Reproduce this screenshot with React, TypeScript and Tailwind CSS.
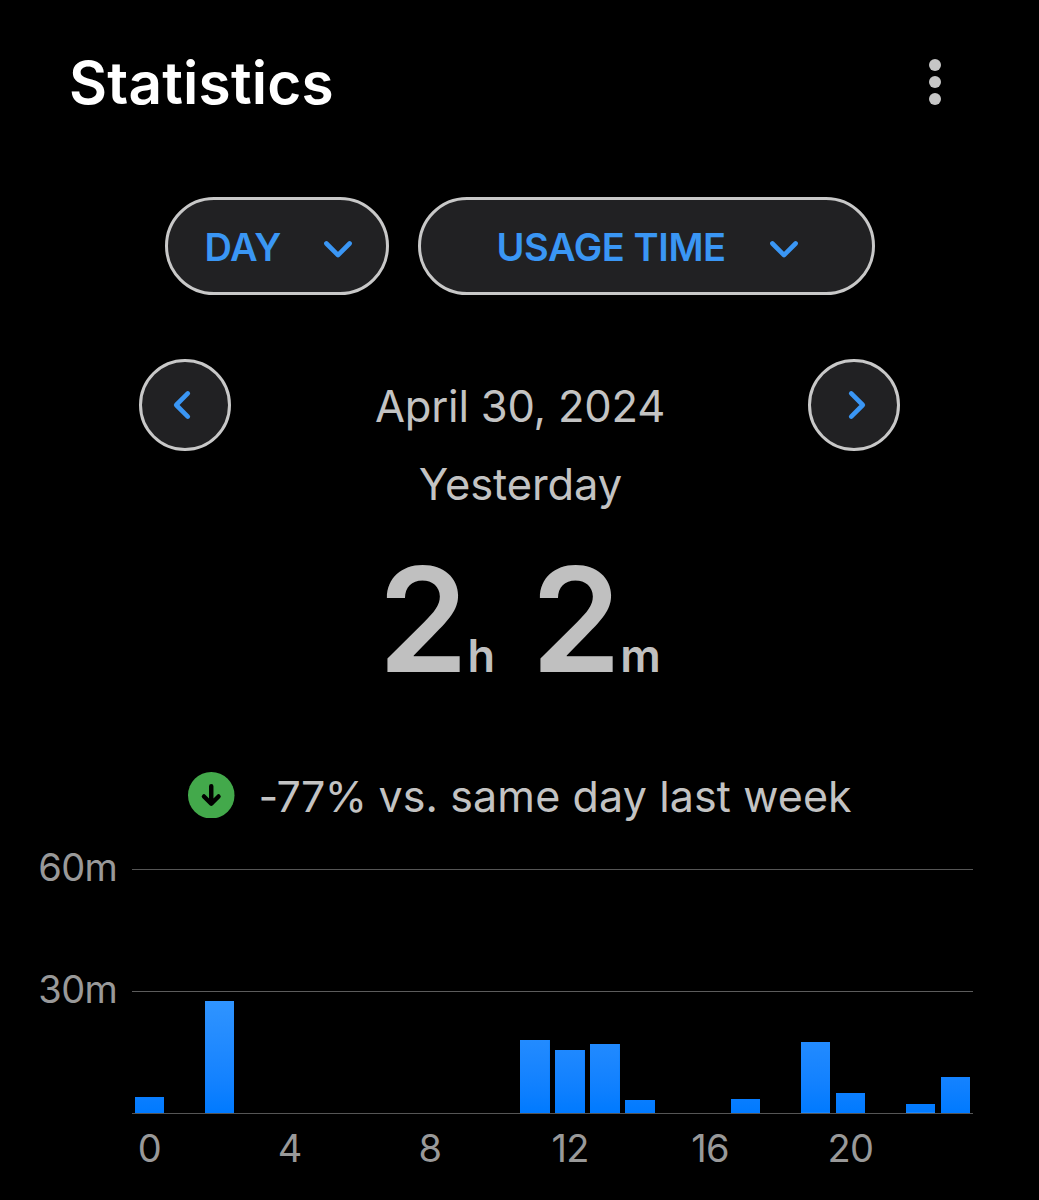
import type { ReactNode } from "react";

// minutes of usage for each hour of the day
const usage = [
  4, 0, 27.6, 0, 0, 0, 0, 0, 0, 0, 0.1, 18, 15.4, 16.9, 3.1, 0, 0, 3.5, 0.1, 17.4, 5, 0, 2.1, 8.9,
];

const hourLabels = [0, 4, 8, 12, 16, 20];

const PX_PER_MINUTE = 4.06;

function Chevron({ className, d }: { className: string; d: string }) {
  return (
    <svg className={className} viewBox="0 0 32 32" fill="none" stroke="#3a96f4" strokeWidth="4.6" strokeLinecap="round" strokeLinejoin="round">
      <path d={d} />
    </svg>
  );
}

function RoundButton({ label, children }: { label: string; children: ReactNode }) {
  return (
    <button
      aria-label={label}
      className="flex size-[92px] items-center justify-center rounded-full border-3 border-[#c8c8c8] bg-[#212123]"
    >
      {children}
    </button>
  );
}

function Header() {
  return (
    <header className="flex h-[165px] items-center justify-between pr-[98px] pl-[69px]">
      <h1 className="mt-0.5 text-[58.5px] leading-none font-semibold tracking-[0.2px] text-white">Statistics</h1>
      <button aria-label="More" className="mb-px flex flex-col gap-[5.4px]">
        <span className="size-3 rounded-full bg-[#c6c6c6]" />
        <span className="size-3 rounded-full bg-[#c6c6c6]" />
        <span className="size-3 rounded-full bg-[#c6c6c6]" />
      </button>
    </header>
  );
}

function Filters() {
  return (
    <div className="mt-8 flex h-[98px] gap-[29px] pl-[164.5px] text-[38px] leading-none font-semibold tracking-[-0.4px] text-[#3a96f4]">
      <button className="flex w-[224px] items-center rounded-full border-3 border-[#c8c8c8] bg-[#212123] pl-[37px]">
        <span className="mt-0.5 w-[117px] text-left whitespace-nowrap">DAY</span>
        <Chevron className="mt-[5px] size-8" d="M4.4 10.5 16 22.1 27.6 10.5" />
      </button>
      <button className="flex w-[457px] items-center rounded-full border-3 border-[#c8c8c8] bg-[#212123] pl-[76px]">
        <span className="mt-0.5 w-[271px] text-left whitespace-nowrap">USAGE TIME</span>
        <Chevron className="mt-[5px] size-8" d="M4.4 10.5 16 22.1 27.6 10.5" />
      </button>
    </div>
  );
}

function DateNav() {
  return (
    <div className="mt-16 flex h-[92px] items-center justify-between pr-[139px] pl-[139px]">
      <RoundButton label="Previous day">
        <Chevron className="mr-1.5 size-8" d="M21.8 4.4 10.2 16 21.8 27.6" />
      </RoundButton>
      <span className="mt-[3px] pl-px text-[43.5px] leading-none tracking-[-0.2px] text-[#c3c3c3]">April 30, 2024</span>
      <RoundButton label="Next day">
        <Chevron className="ml-1.5 size-8" d="M10.2 4.4 21.8 16 10.2 27.6" />
      </RoundButton>
    </div>
  );
}

function Total() {
  return (
    <div className="mt-[41px] flex h-[145px] items-baseline justify-center font-semibold text-[#c0c0c0]">
      <span className="text-[145px] leading-[145px]">2</span>
      <span className="-ml-px text-[45px] leading-none">h</span>
      <span className="ml-9 text-[145px] leading-[145px]">2</span>
      <span className="-ml-px text-[45px] leading-none">m</span>
    </div>
  );
}

function Comparison() {
  return (
    <div className="mt-20 flex h-[46px] items-center pl-[188px]">
      <svg className="size-[46.5px] shrink-0" viewBox="0 0 46 46" fill="none">
        <circle cx="23" cy="23" r="23" fill="#43a94b" />
        <path d="M23 14V31M15.8 24.2 23 31.4 30.2 24.2" stroke="#000" strokeWidth="4.4" strokeLinecap="round" strokeLinejoin="round" />
      </svg>
      <span className="mt-[3px] ml-6 text-[43px] leading-none tracking-[0.12px] whitespace-nowrap text-[#c3c3c3]">
        <span className="tracking-[-0.7px]">-77%</span> vs. same day last week
      </span>
    </div>
  );
}

function UsageChart() {
  return (
    <section className="mt-[51px] grid grid-cols-[117px_841px] gap-x-[15px] text-[38px] leading-none tracking-[-0.7px] text-[#999]">
      <div className="-mt-[21px] flex flex-col items-end">
        <span className="h-[122px]">60m</span>
        <span className="h-[122px]">30m</span>
      </div>
      <div className="relative flex h-[244px] items-end border-t-[1.5px] border-[#555]">
        <div className="absolute top-[121px] left-0 h-px w-full bg-[#5c5c5c]" />
        {usage.map((minutes, hour) => (
          <div key={hour} className="flex flex-1 items-end justify-center">
            <div
              className="w-[29.4px] bg-[#007aff] bg-linear-to-t from-[#007aff] to-[#3296ff] bg-[length:100%_122px] bg-bottom"
              style={{ height: minutes * PX_PER_MINUTE }}
            />
          </div>
        ))}
        <div className="absolute -bottom-px left-0 h-[1.5px] w-full bg-[#555]" />
      </div>
      <div className="col-start-2 mt-4 grid grid-cols-6">
        {hourLabels.map((hour) => (
          <span key={hour} className="w-[35px] text-center">
            <span className="-mx-4 block">{hour}</span>
          </span>
        ))}
      </div>
    </section>
  );
}

export default function App() {
  return (
    <main className="h-[1200px] w-[1039px] overflow-hidden bg-black font-['Inter',sans-serif]">
      <Header />
      <Filters />
      <DateNav />
      <p className="mt-[11px] pl-0.5 text-center text-[43.5px] leading-[44px] tracking-[-0.1px] text-[#c3c3c3]">Yesterday</p>
      <Total />
      <Comparison />
      <UsageChart />
    </main>
  );
}
